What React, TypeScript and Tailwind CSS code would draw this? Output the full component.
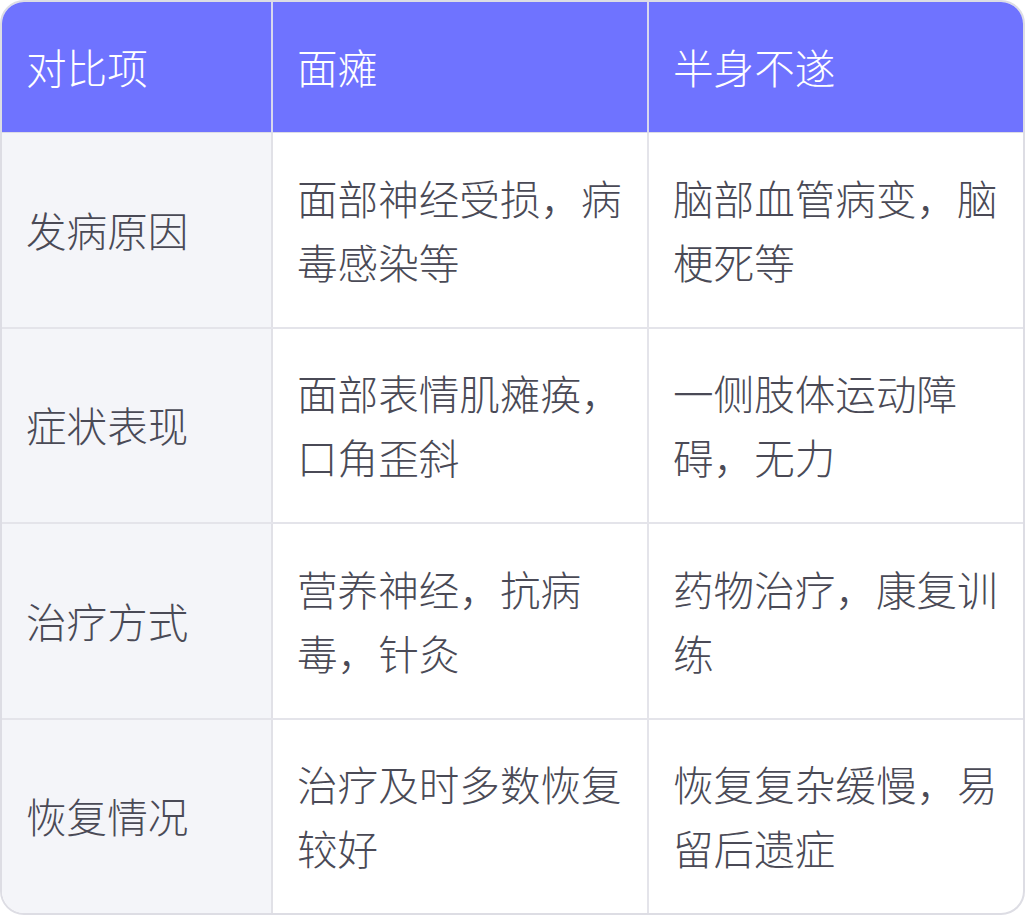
import React from "react";

const rows: [string, string, string][] = [
  ["发病原因", "面部神经受损，病毒感染等", "脑部血管病变，脑梗死等"],
  ["症状表现", "面部表情肌瘫痪，口角歪斜", "一侧肢体运动障碍，无力"],
  ["治疗方式", "营养神经，抗病毒，针灸", "药物治疗，康复训练"],
  ["恢复情况", "治疗及时多数恢复较好", "恢复复杂缓慢，易留后遗症"],
];

export default function App() {
  return (
    <div
      className="w-[1025px] h-[915px] bg-white"
      style={{ fontFamily: '"Noto Sans CJK SC", "Noto Sans", sans-serif' }}
    >
      <div className="w-[1025px] h-[915px] border-2 border-[#dddde4] rounded-[24px] overflow-hidden flex flex-col">
        <div className="grid grid-cols-[271px_376px_1fr] bg-[#6f73ff] text-white text-[40.6px] font-light leading-[64px] border-b border-[#dcdce6]">
          <div className="px-[24px] py-[33px] border-r-2 border-[#d8d8ee]">对比项</div>
          <div className="px-[24px] py-[33px] border-r-2 border-[#d8d8ee]">面瘫</div>
          <div className="px-[24px] py-[33px]">半身不遂</div>
        </div>
        {rows.map((r, i) => (
          <div
            key={i}
            className={`grid grid-cols-[271px_376px_1fr] flex-1 text-[40.6px] font-light leading-[64px] text-[#4a4a56] ${
              i < rows.length - 1 ? "border-b-2 border-[#e4e4ea]" : ""
            }`}
          >
            <div className="bg-[#f4f5f9] pl-[24px] pr-[20px] flex items-center border-r-2 border-[#e1e1e7]">
              {r[0]}
            </div>
            <div className="pl-[24px] pr-[20px] flex items-center border-r-2 border-[#e4e4ea]">
              {r[1]}
            </div>
            <div className="pl-[24px] pr-[20px] flex items-center">{r[2]}</div>
          </div>
        ))}
      </div>
    </div>
  );
}
